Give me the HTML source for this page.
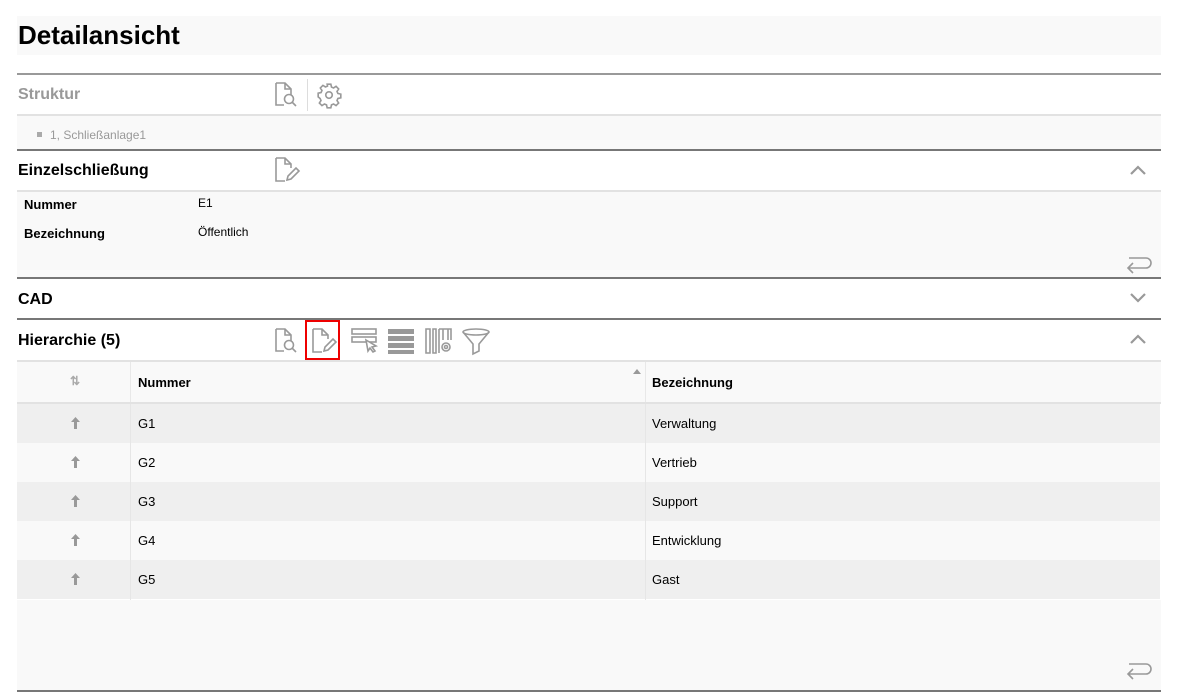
<!DOCTYPE html>
<html><head><meta charset="utf-8"><style>
*{margin:0;padding:0;box-sizing:border-box}
body{width:1181px;height:698px;background:#fff;font-family:"Liberation Sans",Arial,sans-serif;position:relative;overflow:hidden;color:#000}
.a{position:absolute}
.dk{position:absolute;left:17px;width:1144px;height:2px;background:#777}
.lt{position:absolute;left:17px;width:1144px;height:2px;background:#e2e2e2}
.h{position:absolute;left:18px;font-size:16px;font-weight:bold}
.bg{position:absolute;left:17px;width:1144px;background:#f9f9f9}
.lbl{position:absolute;font-size:13px;font-weight:bold}
.t{position:absolute;font-size:13px}
.row{position:absolute;left:17px;width:1143px;height:39px}
svg{position:absolute;overflow:visible}
</style></head><body>
<div class="a" style="left:17px;top:16px;width:1144px;height:39px;background:#f9f9f9"></div>
<div class="a" style="left:18px;top:20px;font-size:26px;font-weight:bold">Detailansicht</div>

<div class="dk" style="top:73px;background:#999"></div>
<div class="h" style="top:86px;color:#999">Struktur</div>
<svg style="left:274px;top:82px" width="26" height="26" viewBox="0 0 26 26" fill="none" stroke="#999" stroke-width="1.6"><path d="M2 1h9l6 6v6M2 1v22h8M11 1v6h6"/><circle cx="15" cy="17" r="4.5"/><path d="M18 20l4 4"/></svg>
<div class="a" style="left:307px;top:79px;width:1px;height:32px;background:#ddd"></div>
<svg style="left:316px;top:82px" width="26" height="26" viewBox="0 0 24 24" fill="none" stroke="#999" stroke-width="1.5"><circle cx="12" cy="12" r="3"/><path d="M10.3 2h3.4l.6 2.7 1.9.8 2.3-1.5 2.4 2.4-1.5 2.3.8 1.9 2.7.6v3.4l-2.7.6-.8 1.9 1.5 2.3-2.4 2.4-2.3-1.5-1.9.8-.6 2.7h-3.4l-.6-2.7-1.9-.8-2.3 1.5-2.4-2.4 1.5-2.3-.8-1.9L2 13.7v-3.4l2.7-.6.8-1.9-1.5-2.3 2.4-2.4 2.3 1.5 1.9-.8z"/></svg>
<div class="lt" style="top:114px"></div>
<div class="bg" style="top:116px;height:33px"></div>
<div class="a" style="left:37px;top:132px;width:5px;height:5px;background:#aaa"></div>
<div class="t" style="left:50px;top:128px;color:#999;font-size:12px">1, Schließanlage1</div>
<div class="dk" style="top:149px"></div>

<div class="h" style="top:162px">Einzelschließung</div>
<svg style="left:274px;top:157px" width="26" height="26" viewBox="0 0 26 26" fill="none" stroke="#999" stroke-width="1.6"><path d="M2 1h9l6 6v4M2 1v23h9M11 1v6h6"/><path d="M13 23l1-4 8-8 3 3-8 8z"/></svg>
<svg style="left:1130px;top:165px" width="16" height="10" viewBox="0 0 16 10" fill="none" stroke="#999" stroke-width="2.2"><path d="M1 9l7-7 7 7"/></svg>
<div class="lt" style="top:190px"></div>
<div class="bg" style="top:192px;height:85px"></div>
<div class="lbl" style="left:24px;top:197px">Nummer</div>
<div class="t" style="left:198px;top:196px;font-size:12px">E1</div>
<div class="lbl" style="left:24px;top:226px">Bezeichnung</div>
<div class="t" style="left:198px;top:225px;font-size:12px">Öffentlich</div>
<svg style="left:1124px;top:255px" width="28" height="18" viewBox="0 0 28 18" fill="none" stroke="#999" stroke-width="1.6"><path d="M4 13h18a5 5 0 0 0 0-10H5M9 8l-5 5 5 5"/></svg>
<div class="dk" style="top:277px"></div>

<div class="h" style="top:291px">CAD</div>
<svg style="left:1130px;top:293px" width="16" height="10" viewBox="0 0 16 10" fill="none" stroke="#999" stroke-width="2.2"><path d="M1 1l7 7 7-7"/></svg>
<div class="dk" style="top:318px"></div>

<div class="h" style="top:332px">Hierarchie (5)</div>
<svg style="left:274px;top:328px" width="26" height="26" viewBox="0 0 26 26" fill="none" stroke="#999" stroke-width="1.6"><path d="M2 1h9l6 6v6M2 1v22h8M11 1v6h6"/><circle cx="15" cy="17" r="4.5"/><path d="M18 20l4 4"/></svg>
<div class="a" style="left:305px;top:320px;width:35px;height:40px;border:2px solid #e00"></div>
<svg style="left:311px;top:328px" width="26" height="26" viewBox="0 0 26 26" fill="none" stroke="#999" stroke-width="1.6"><path d="M2 1h9l6 6v4M2 1v23h9M11 1v6h6"/><path d="M13 23l1-4 8-8 3 3-8 8z"/></svg>
<svg style="left:351px;top:328px" width="28" height="26" viewBox="0 0 28 26" fill="none" stroke="#999" stroke-width="1.6"><rect x="1" y="1" width="24" height="5"/><rect x="1" y="9" width="24" height="5"/><path d="M15 12l10 6-4 1 3 4-2 1-3-4-2 3z" fill="#fff"/></svg>
<svg style="left:388px;top:328px" width="26" height="26" viewBox="0 0 26 26"><rect x="0" y="1" width="26" height="5" fill="#999"/><rect x="0" y="8" width="26" height="5" fill="#999"/><rect x="0" y="15" width="26" height="5" fill="#999"/><rect x="0" y="22" width="26" height="4" fill="#999"/></svg>
<svg style="left:425px;top:328px" width="28" height="26" viewBox="0 0 28 26" fill="none" stroke="#999" stroke-width="1.6"><path d="M1 1v24h4V1zM8 1v24h3V1zM14 1v24M18 1v11M23 1v11M14 1h12v11"/><circle cx="21" cy="19" r="4"/><circle cx="21" cy="19" r="1.5"/></svg>
<svg style="left:461px;top:328px" width="30" height="28" viewBox="0 0 30 28" fill="none" stroke="#999" stroke-width="1.6"><ellipse cx="15" cy="4" rx="13" ry="3"/><path d="M2 4l10 12v10l6-3V16l10-12"/></svg>
<svg style="left:1130px;top:334px" width="16" height="10" viewBox="0 0 16 10" fill="none" stroke="#999" stroke-width="2.2"><path d="M1 9l7-7 7 7"/></svg>
<div class="lt" style="top:360px"></div>

<div class="bg" style="top:362px;height:40px"></div>
<div class="a" style="left:130px;top:362px;width:1px;height:238px;background:#e8e8e8"></div>
<div class="a" style="left:645px;top:362px;width:1px;height:238px;background:#e8e8e8"></div>
<div class="t" style="left:70px;top:374px;color:#aaa;font-size:12px;font-weight:bold">⇅</div>
<div class="lbl" style="left:138px;top:375px">Nummer</div>
<svg style="left:633px;top:369px" width="8" height="5" viewBox="0 0 8 5"><path d="M0 5l4-5 4 5z" fill="#999"/></svg>
<div class="lbl" style="left:652px;top:375px">Bezeichnung</div>
<div class="lt" style="top:402px"></div>

<div class="row" style="top:404px;background:#efefef"></div>
<div class="row" style="top:443px;background:#f9f9f9"></div>
<div class="row" style="top:482px;background:#efefef"></div>
<div class="row" style="top:521px;background:#f9f9f9"></div>
<div class="row" style="top:560px;background:#efefef"></div>
<div class="a" style="left:130px;top:404px;width:1px;height:196px;background:#e6e6e6"></div>
<div class="a" style="left:645px;top:404px;width:1px;height:196px;background:#e6e6e6"></div>

<svg style="left:71px;top:417px" width="9" height="12" viewBox="0 0 9 12"><path d="M4.5 0L9 5H6v7H3V5H0z" fill="#999"/></svg>
<svg style="left:71px;top:456px" width="9" height="12" viewBox="0 0 9 12"><path d="M4.5 0L9 5H6v7H3V5H0z" fill="#999"/></svg>
<svg style="left:71px;top:495px" width="9" height="12" viewBox="0 0 9 12"><path d="M4.5 0L9 5H6v7H3V5H0z" fill="#999"/></svg>
<svg style="left:71px;top:534px" width="9" height="12" viewBox="0 0 9 12"><path d="M4.5 0L9 5H6v7H3V5H0z" fill="#999"/></svg>
<svg style="left:71px;top:573px" width="9" height="12" viewBox="0 0 9 12"><path d="M4.5 0L9 5H6v7H3V5H0z" fill="#999"/></svg>

<div class="t" style="left:138px;top:416px">G1</div><div class="t" style="left:652px;top:416px">Verwaltung</div>
<div class="t" style="left:138px;top:455px">G2</div><div class="t" style="left:652px;top:455px">Vertrieb</div>
<div class="t" style="left:138px;top:494px">G3</div><div class="t" style="left:652px;top:494px">Support</div>
<div class="t" style="left:138px;top:533px">G4</div><div class="t" style="left:652px;top:533px">Entwicklung</div>
<div class="t" style="left:138px;top:572px">G5</div><div class="t" style="left:652px;top:572px">Gast</div>

<div class="bg" style="top:600px;height:90px"></div>
<svg style="left:1124px;top:661px" width="28" height="18" viewBox="0 0 28 18" fill="none" stroke="#999" stroke-width="1.6"><path d="M4 13h18a5 5 0 0 0 0-10H5M9 8l-5 5 5 5"/></svg>
<div class="dk" style="top:690px"></div>
</body></html>
